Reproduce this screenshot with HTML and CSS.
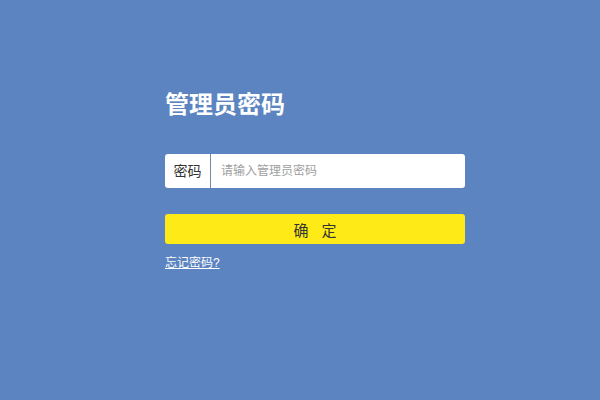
FILE: index.html
```html
<!DOCTYPE html>
<html lang="zh">
<head>
<meta charset="utf-8">
<link rel="stylesheet" href="styles.css">
</head>
<body>
<div class="page">
  <div class="panel">
    <h1 class="title">管理员密码</h1>
    <div class="field">
      <span class="label">密码</span>
      <input class="input" type="password" placeholder="请输入管理员密码">
    </div>
    <button class="btn">确定</button>
    <a class="forgot" href="#">忘记密码?</a>
  </div>
</div>
</body>
</html>
```
FILE: styles.css
```css
html, body {
  margin: 0;
  padding: 0;
}
body {
  background: #5b84c0;
  font-family: "Liberation Sans", "Noto Sans CJK SC", sans-serif;
  width: 600px;
  height: 400px;
  overflow: hidden;
}
.page {
  display: flex;
  padding-top: 89px;
  padding-left: 165px;
}
.panel {
  width: 300px;
  display: flex;
  flex-direction: column;
}
.title {
  margin: 0;
  font-size: 24px;
  line-height: 32px;
  font-weight: bold;
  color: #ffffff;
}
.field {
  margin-top: 33px;
  height: 34px;
  background: #ffffff;
  border-radius: 3px;
  display: flex;
  align-items: center;
}
.label {
  flex: none;
  width: 46px;
  height: 34px;
  line-height: 34px;
  text-align: center;
  font-size: 14px;
  color: #333333;
  border-right: 1px solid #7a8aa6;
  box-sizing: border-box;
}
.input {
  flex: 1;
  border: none;
  outline: none;
  background: transparent;
  height: 34px;
  padding: 0 0 0 10px;
  font-size: 12px;
  font-family: "Liberation Sans", "Noto Sans CJK SC", sans-serif;
  color: #333;
}
.input::placeholder {
  color: #a0a0a0;
}
.btn {
  margin-top: 26px;
  height: 30px;
  border: none;
  border-radius: 3px;
  background: #fdea16;
  color: #333333;
  font-size: 15px;
  letter-spacing: 13px;
  text-indent: 13px;
  font-family: "Liberation Sans", "Noto Sans CJK SC", sans-serif;
  padding: 0;
}
.forgot {
  margin-top: 11px;
  align-self: flex-start;
  font-size: 12px;
  line-height: 16px;
  color: #ffffff;
  text-decoration: underline;
}
```
